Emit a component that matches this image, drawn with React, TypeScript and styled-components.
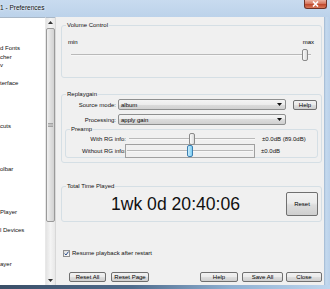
import React from 'react';
import styled, { createGlobalStyle } from 'styled-components';

const Global = createGlobalStyle`
  html, body { margin: 0; padding: 0; width: 330px; height: 289px; overflow: hidden; background: #bcd3ea; }
  body { font-family: "Liberation Sans", Arial, sans-serif; font-size: 6px; color: #000; }
  * { box-sizing: border-box; }
`;

const Window = styled.div`
  width: 330px;
  height: 289px;
  display: flex;
  flex-direction: column;
  background: #bfd5ec;
`;

const TitleBar = styled.div`
  height: 17px;
  flex: none;
  display: flex;
  justify-content: space-between;
  align-items: flex-start;
  background: linear-gradient(#c8dbef, #bcd2ea);
`;

const Title = styled.div`
  font-size: 6.5px;
  padding-top: 4px;
  color: #111;
  text-shadow: 0 0 3px #eaf2fb, 0 0 2px #eaf2fb;
`;

const CloseButton = styled.div`
  width: 23px;
  height: 9px;
  margin-right: 3px;
  border: 1px solid #6e3328;
  border-top: none;
  border-radius: 0 0 3px 3px;
  background: linear-gradient(#eab0a0, #d6775f 45%, #c04a2e 55%, #d87a5c);
  display: flex;
  align-items: center;
  justify-content: center;
`;

const Middle = styled.div`
  flex: 1;
  min-height: 0;
  display: flex;
`;

const TreePane = styled.div`
  width: 45px;
  flex: none;
  background: #fff;
  border-top: 1px solid #a9b8c8;
  overflow: hidden;
`;

const TreeRow = styled.div`
  height: 8.66px;
  line-height: 8.66px;
  white-space: nowrap;
  font-size: 6px;
  color: #111;
`;

const ScrollBar = styled.div`
  width: 10px;
  flex: none;
  display: flex;
  flex-direction: column;
  align-items: stretch;
  background: linear-gradient(90deg, #e3e3e3, #f4f4f4 50%, #e8e8e8);
  border-left: 1px solid #e8e8e8;
  border-top: 1px solid #a9b8c8;
`;

const ScrollArrow = styled.div`
  height: 9px;
  flex: none;
  display: flex;
  align-items: center;
  justify-content: center;
`;

const ScrollThumb = styled.div`
  height: 194px;
  flex: none;
  margin: 1px 0;
  border: 1px solid #9a9a9a;
  border-radius: 2px;
  background: linear-gradient(90deg, #f0f0f0, #e0e0e0 50%, #d2d2d2);
  display: flex;
  align-items: center;
  justify-content: center;
`;

const ScrollSpacer = styled.div`
  flex: 1;
`;

const Content = styled.div`
  flex: 1;
  min-width: 0;
  display: flex;
  flex-direction: column;
  padding: 5px 2px 0 5px;
  background: #f0f0f0;
  border-left: 1px solid #d8d8d8;
`;

const Group = styled.fieldset<{ $h: number; $mt: number }>`
  margin: ${(p) => p.$mt}px 0 0 0;
  padding: 0 3px;
  height: ${(p) => p.$h}px;
  border: 1px solid #d5dfe5;
  border-radius: 3px;
  min-width: 0;
`;

const Legend = styled.legend`
  padding: 0 1px;
  margin-left: 1px;
  font-size: 6px;
  line-height: 7px;
  color: #111;
`;

const MinMax = styled.div`
  display: flex;
  justify-content: space-between;
  padding: 10px 4px 0 3px;
  line-height: 6px;
  font-size: 6px;
`;

const SliderTrack = styled.div<{ $w: number }>`
  position: relative;
  width: ${(p) => p.$w}px;
  height: 12px;
`;

const TrackLine = styled.div`
  position: absolute;
  left: 0;
  right: 0;
  top: 5px;
  height: 2px;
  border-top: 1px solid #b9b9b9;
  border-bottom: 1px solid #f7f7f7;
  background: #e2e2e2;
`;

const Thumb = styled.div<{ $blue?: boolean }>`
  position: absolute;
  top: 0;
  width: 6px;
  height: 12px;
  margin-left: -3px;
  border: 1px solid ${(p) => (p.$blue ? '#3c7fb1' : '#8a8a8a')};
  border-radius: 2px;
  background: ${(p) =>
    p.$blue ? 'linear-gradient(90deg, #c9ecfc, #7dcdf2)' : 'linear-gradient(90deg, #fafafa, #dcdcdc)'};
`;

const VolumeSliderRow = styled.div`
  padding: 4px 0 0 6px;
`;

const FormRow = styled.div<{ $mt: number }>`
  display: flex;
  align-items: center;
  margin-top: ${(p) => p.$mt}px;
  height: 11px;
`;

const RowLabel = styled.div<{ $w: number }>`
  width: ${(p) => p.$w}px;
  flex: none;
  text-align: right;
  padding-right: 2px;
  white-space: nowrap;
  color: #111;
`;

const Combo = styled.div`
  width: 168px;
  height: 11px;
  flex: none;
  display: flex;
  align-items: center;
  justify-content: space-between;
  padding: 0 3px 0 2px;
  border: 1px solid #8e8f8f;
  border-radius: 2px;
  background: linear-gradient(#f4f4f4, #ececec 50%, #dcdcdc 50%, #d0d0d0);
`;

const SmallButton = styled.div<{ $w: number; $h?: number; $ml?: number }>`
  width: ${(p) => p.$w}px;
  height: ${(p) => p.$h ?? 10}px;
  margin-left: ${(p) => p.$ml ?? 0}px;
  flex: none;
  display: flex;
  align-items: center;
  justify-content: center;
  border: 1px solid #707070;
  border-radius: 2px;
  background: linear-gradient(#f2f2f2, #ebebeb 45%, #dddddd 55%, #cfcfcf);
  font-size: 6px;
  white-space: nowrap;
`;

const SubGroup = styled.fieldset`
  margin: 1px 0 0 0;
  padding: 0 3px;
  height: 32px;
  border: 1px solid #d5dfe5;
  border-radius: 3px;
  min-width: 0;
`;

const PreampRow = styled.div`
  display: flex;
  align-items: center;
  height: 12px;
`;

const FocusFrame = styled.div`
  padding: 0 1px;
  border: 1px solid #a0a0a0;
  margin-left: -3px;
`;

const PlainSlider = styled.div`
  padding: 0 1px;
`;

const DbValue = styled.div`
  margin-left: 6px;
  white-space: nowrap;
  color: #111;
`;

const TimeBody = styled.div`
  display: flex;
  align-items: center;
  height: 26px;
  margin-top: 1px;
`;

const TimeText = styled.div`
  flex: 1;
  text-align: center;
  font-size: 17.6px;
  color: #111;
  white-space: nowrap;
  padding-top: 1px;
`;

const CheckRow = styled.div`
  display: flex;
  align-items: center;
  margin-top: 27px;
  padding-left: 2px;
  height: 8px;
  color: #111;
`;

const CheckBox = styled.div`
  width: 7px;
  height: 7px;
  border: 1px solid #8f8f8f;
  background: linear-gradient(135deg, #dcdcdc, #fbfbfb);
  display: flex;
  align-items: center;
  justify-content: center;
  margin-right: 2px;
`;

const ButtonBar = styled.div`
  display: flex;
  align-items: center;
  margin-top: 15px;
  padding-left: 8px;
`;

const Spacer = styled.div`
  flex: 1;
`;

const RightFrame = styled.div`
  width: 6px;
  flex: none;
  background: linear-gradient(90deg, #9fb6cf, #c4d9ee 30%, #bad1ea);
`;

const BottomFrame = styled.div`
  height: 4px;
  flex: none;
  background: linear-gradient(90deg, #3b4f68, #4f6c8d 40%, #8fb0d2 70%, #bfd6ee);
`;

const treeLabels: Record<number, string> = {
  3: 'd Fonts',
  4: 'cher',
  5: 'v',
  7: 'terface',
  12: 'cuts',
  17: 'olbar',
  22: 'Player',
  24: 'l Devices',
  28: 'ayer',
};

const Arrow = ({ down }: { down?: boolean }) => (
  <svg width="5" height="3" viewBox="0 0 5 3">
    <path d={down ? 'M0 0 H5 L2.5 3 Z' : 'M0 3 H5 L2.5 0 Z'} fill="#333" />
  </svg>
);

const ComboArrow = () => (
  <svg width="5" height="3" viewBox="0 0 5 3">
    <path d="M0 0 H5 L2.5 3 Z" fill="#111" />
  </svg>
);

export default function App() {
  return (
    <>
      <Global />
      <Window>
        <TitleBar>
          <Title>1 - Preferences</Title>
          <CloseButton>
            <svg width="7" height="6" viewBox="0 0 7 6">
              <path d="M1 0.5 L6 5.5 M6 0.5 L1 5.5" stroke="#fff" strokeWidth="1.6" />
            </svg>
          </CloseButton>
        </TitleBar>
        <Middle>
          <TreePane>
            {Array.from({ length: 31 }, (_, i) => (
              <TreeRow key={i}>{treeLabels[i] ?? '\u00a0'}</TreeRow>
            ))}
          </TreePane>
          <ScrollBar>
            <ScrollArrow>
              <Arrow />
            </ScrollArrow>
            <ScrollThumb>
              <svg width="5" height="4" viewBox="0 0 5 4">
                <path d="M0 0.5 H5 M0 2 H5 M0 3.5 H5" stroke="#8a8a8a" strokeWidth="0.7" />
              </svg>
            </ScrollThumb>
            <ScrollSpacer />
            <ScrollArrow>
              <Arrow down />
            </ScrollArrow>
          </ScrollBar>
          <Content>
            <Group $h={56} $mt={0}>
              <Legend>Volume Control</Legend>
              <MinMax>
                <span>min</span>
                <span>max</span>
              </MinMax>
              <VolumeSliderRow>
                <SliderTrack $w={240}>
                  <TrackLine />
                  <Thumb style={{ left: '97.5%' }} />
                </SliderTrack>
              </VolumeSliderRow>
            </Group>

            <Group $h={72} $mt={13}>
              <Legend>Replaygain</Legend>
              <FormRow $mt={1}>
                <RowLabel $w={53}>Source mode:</RowLabel>
                <Combo>
                  <span>album</span>
                  <ComboArrow />
                </Combo>
                <SmallButton $w={24} $ml={7}>Help</SmallButton>
              </FormRow>
              <FormRow $mt={4}>
                <RowLabel $w={53}>Processing:</RowLabel>
                <Combo>
                  <span>apply gain</span>
                  <ComboArrow />
                </Combo>
              </FormRow>
              <SubGroup>
                <Legend>Preamp</Legend>
                <PreampRow>
                  <RowLabel $w={59}>With RG info:</RowLabel>
                  <PlainSlider>
                    <SliderTrack $w={126}>
                      <TrackLine />
                      <Thumb style={{ left: '50%' }} />
                    </SliderTrack>
                  </PlainSlider>
                  <DbValue>±0.0dB (89.0dB)</DbValue>
                </PreampRow>
                <PreampRow>
                  <RowLabel $w={59}>Without RG info:</RowLabel>
                  <FocusFrame>
                    <SliderTrack $w={126}>
                      <TrackLine />
                      <Thumb $blue style={{ left: '50%' }} />
                    </SliderTrack>
                  </FocusFrame>
                  <DbValue>±0.0dB</DbValue>
                </PreampRow>
              </SubGroup>
            </Group>

            <Group $h={39} $mt={20}>
              <Legend>Total Time Played</Legend>
              <TimeBody>
                <TimeText>1wk 0d 20:40:06</TimeText>
                <SmallButton $w={32} $h={24}>Reset</SmallButton>
              </TimeBody>
            </Group>

            <CheckRow>
              <CheckBox>
                <svg width="5" height="5" viewBox="0 0 5 5">
                  <path d="M0.6 2.6 L2 4 L4.5 0.6" stroke="#2a4e8a" strokeWidth="1" fill="none" />
                </svg>
              </CheckBox>
              <span>Resume playback after restart</span>
            </CheckRow>

            <ButtonBar>
              <SmallButton $w={37}>Reset All</SmallButton>
              <SmallButton $w={38} $ml={5}>Reset Page</SmallButton>
              <Spacer />
              <SmallButton $w={38}>Help</SmallButton>
              <SmallButton $w={41} $ml={4}>Save All</SmallButton>
              <SmallButton $w={36} $ml={3}>Close</SmallButton>
            </ButtonBar>
          </Content>
          <RightFrame />
        </Middle>
        <BottomFrame />
      </Window>
    </>
  );
}
